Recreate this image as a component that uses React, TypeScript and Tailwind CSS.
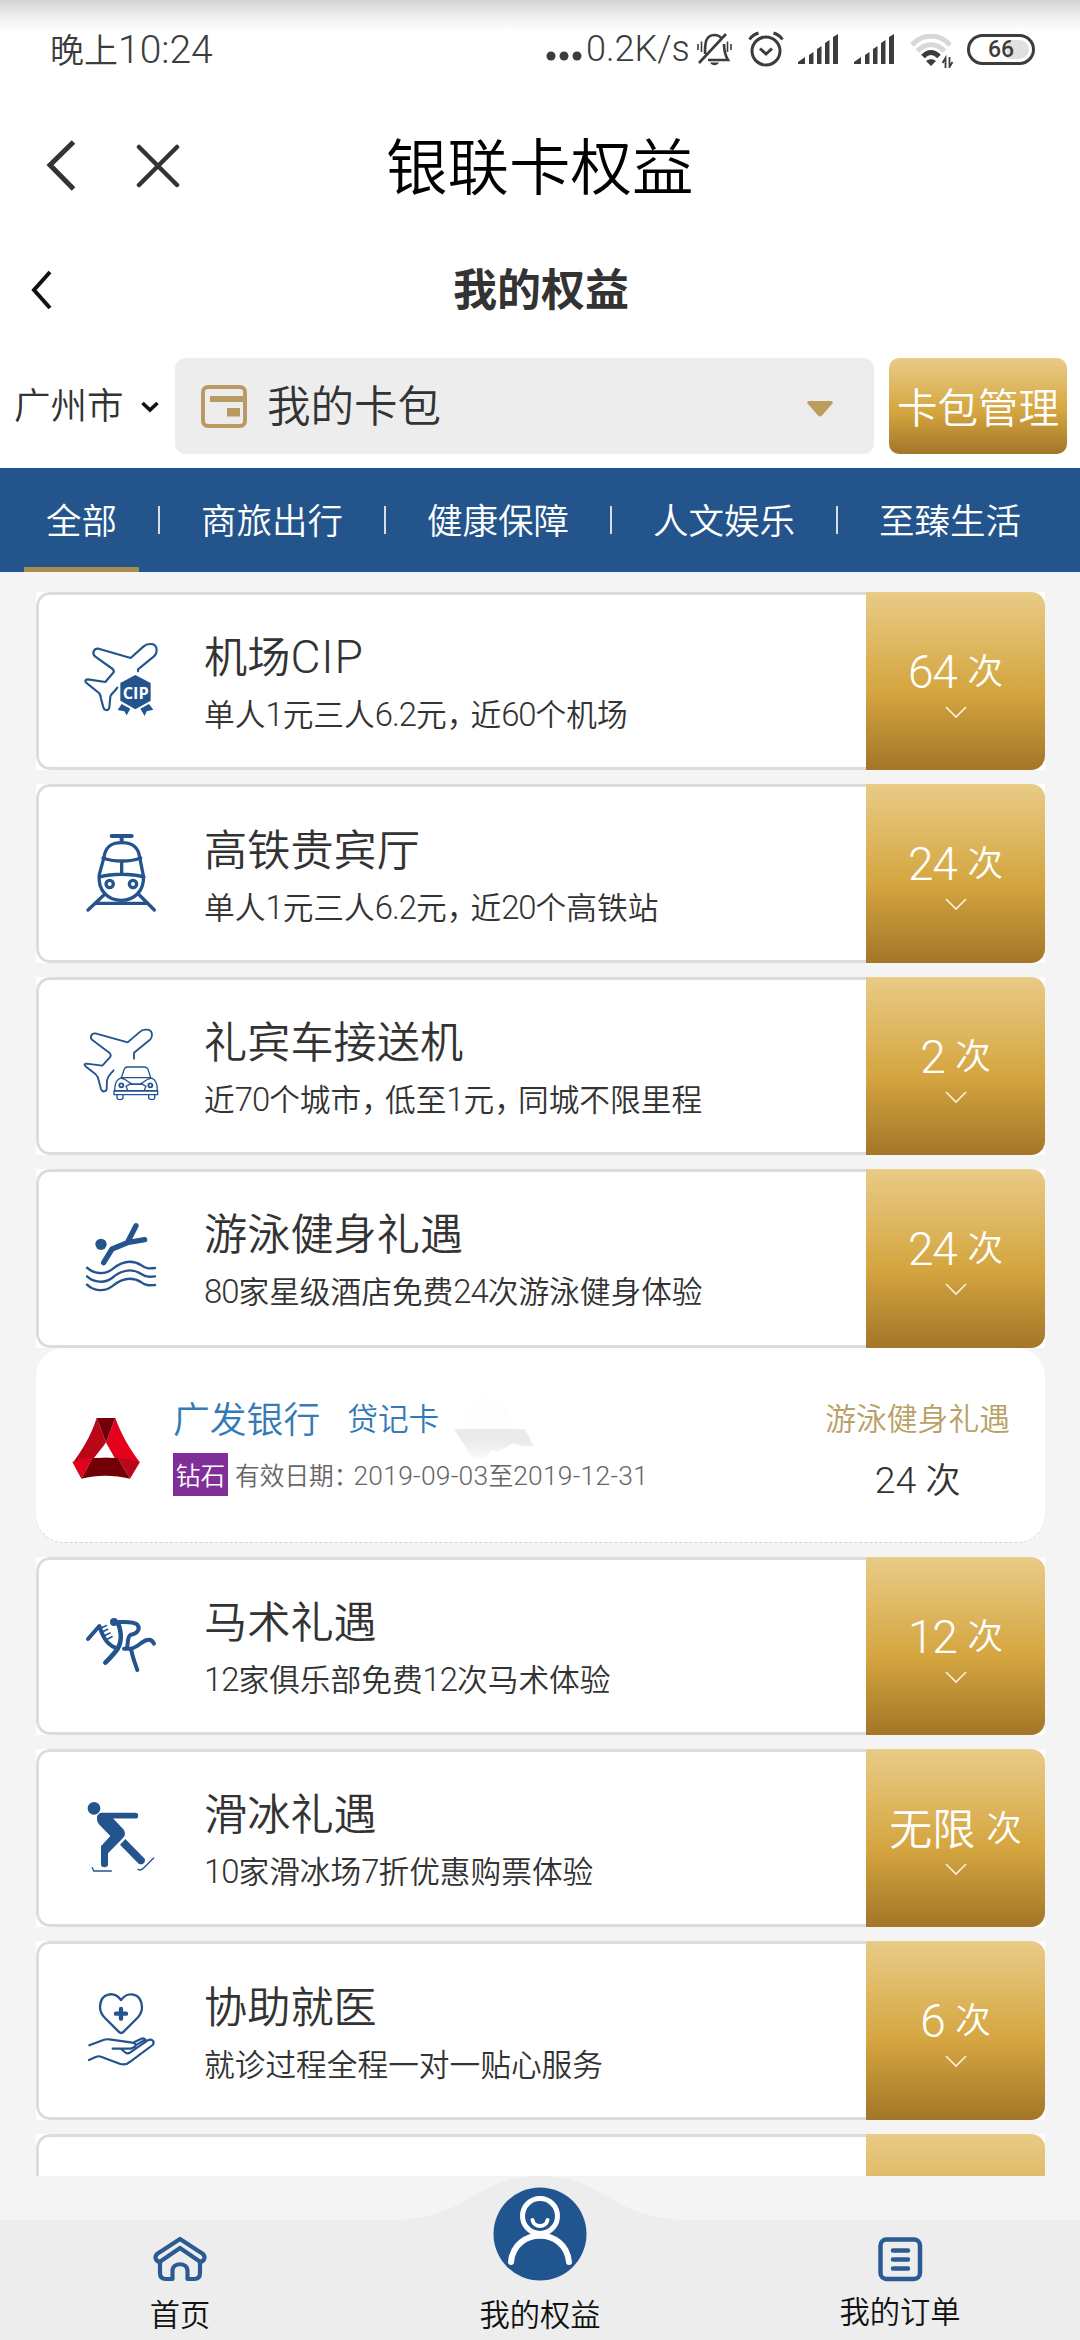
import { Fragment, type ReactNode } from "react";
import { clsx } from "clsx";

type Benefit = {
  id: string;
  title: string;
  desc: string;
  count: string;
  icon?: ReactNode;
};

const BLUE = "#23548e";

// Digits and latin letters use Roboto, slightly bigger than the Chinese glyphs beside them
function Mixed({ text, latin = "tracking-[-0.03em]" }: { text: string; latin?: string }) {
  return (
    <>
      {text.split(/([A-Za-z0-9.\-]+|，)/).map((part, i) => {
        if (part === "，") {
          return (
            <span key={i} className="tracking-[-7px]">
              ，
            </span>
          );
        }
        return /^[A-Za-z0-9.\-]+$/.test(part) ? (
          <span key={i} className={clsx("font-['Roboto'] text-[1.07em] leading-none", latin)}>
            {part}
          </span>
        ) : (
          <Fragment key={i}>{part}</Fragment>
        );
      })}
    </>
  );
}

function CardIcon({ viewBox, width = 7, children }: { viewBox: string; width?: number; children: ReactNode }) {
  return (
    <svg
      className="size-20 shrink-0 overflow-visible"
      viewBox={viewBox}
      fill="none"
      stroke={BLUE}
      strokeWidth={width}
      strokeLinecap="round"
      strokeLinejoin="round"
    >
      {children}
    </svg>
  );
}

const planeIcon = (
  <CardIcon viewBox="153 183 240 240" width={6.5}>
    <path d="M324 274 V268 L371 230 C384 218 384 192 362 192 C352 192 346 194 340 200 L302 234 L206 206 C192 204 184 220 196 230 L248 267 C252 271 252 276 249 279 L226 306 L174 298 C164 299 164 306 171 310 L207 339 C212 345 212 350 213 356 L220 382 C223 393 236 393 238 382 L241 350 C242 343 248 340 254 333 L262 323" />
    <path d="M316 285 L362 309 V362 L316 388 L271 362 V309 Z" fill={BLUE} stroke="none" />
    <path d="M275 372 L301 386 L290 406 L283 394 L263 390 Z M357 372 L331 386 L344 408 L350 394 L370 389 Z" fill={BLUE} stroke="none" />
    <text
      x="317"
      y="356"
      textAnchor="middle"
      textLength="78"
      lengthAdjust="spacingAndGlyphs"
      className="font-['Open_Sans'] text-[47px] font-bold"
      fill="#fff"
      stroke="none"
    >
      CIP
    </text>
  </CardIcon>
);

const trainIcon = (
  <CardIcon viewBox="153 759 240 240" width={10}>
    <path d="M245 765 H305 M275 765 V784" strokeWidth={12} />
    <path d="M222 829 C226 798 242 785 275 785 C308 785 325 798 329 829 L340 884 C344 930 312 958 274 958 C236 958 202 930 208 880 Z" />
    <path d="M219 831 C248 843 303 843 332 831 M275 841 V880 M208 888 C248 877 303 877 342 888" />
    <circle cx="239" cy="909" r="11" />
    <circle cx="309" cy="909" r="11" />
    <path d="M225 939 L174 987 M325 939 L373 987 M200 967 H350" />
  </CardIcon>
);

const carIcon = (
  <CardIcon viewBox="153 168 240 240" width={5.5}>
    <path d="M312 266 V248 L358 211 C370 200 369 178 349 179 C340 178 335 180 328 187 L293 217 L196 190 C183 189 178 204 188 211 L238 248 C243 253 243 259 239 263 L217 287 L169 281 C162 281 162 286 168 290 L197 313 C204 319 205 324 206 331 L213 357 C216 367 229 367 230 356 L231 331 C233 322 236 317 242 311 L251 301" />
    <path
      strokeWidth={4}
      d="M274 323 L283 297 C285 292 287 291 292 291 H344 C350 291 352 293 354 298 L362 323 Z M274 323 C258 329 255 340 254 362 H382 C382 340 378 329 362 323 M252 363 H383 V374 H252 Z M261 375 V385 C262 390 277 390 279 385 V375 M356 375 V385 C358 390 373 390 374 385 V375 M274 325 C290 326 293 338 308 342 H329 C343 339 346 327 362 325 M293 361 L288 349 L298 343 H338 L348 349 L343 361"
    />
    <circle cx="274" cy="346" r="6" />
    <circle cx="361" cy="346" r="6" />
  </CardIcon>
);

const swimIcon = (
  <CardIcon viewBox="153 744 240 240" width={7}>
    <circle cx="213" cy="823" r="17" fill={BLUE} stroke="none" />
    <path d="M221 878 L246 837 L292 818 L344 809 M292 818 L318 767" strokeWidth={16} />
    <path d="M171 893 C192 912 224 915 246 898 C278 872 306 868 334 886 C349 897 360 896 375 894 M171 919 C192 938 224 941 246 924 C278 898 306 894 334 912 C349 922 360 921 375 919 M171 944 C192 964 224 966 246 949 C278 923 306 919 334 937 C349 948 360 946 375 945" />
  </CardIcon>
);

const horseIcon = (
  <CardIcon viewBox="153 168 240 240" width={12}>
    <path d="M174 267 L208 228 C216 252 226 280 254 292" />
    <path d="M250 214 C272 220 306 211 322 224 C333 238 320 252 303 254 C291 259 295 277 291 293" />
    <path d="M264 219 C276 250 275 282 258 303 C248 316 238 326 226 338" strokeWidth={14} />
    <path d="M282 296 H303 C323 292 334 274 351 270 C363 267 368 272 372 281 M303 296 C307 320 315 340 322 360" />
    <circle cx="252" cy="216" r="6" fill={BLUE} />
    <path d="M212 234 L229 227 M217 246 L233 238 M223 257 L240 249 M229 269 L246 260" strokeWidth={5} />
  </CardIcon>
);

const skateIcon = (
  <CardIcon viewBox="153 744 240 240" width={17}>
    <circle cx="192" cy="775" r="19" fill={BLUE} stroke="none" />
    <path d="M214 797 H316" />
    <path d="M201 803 C201 793 210 789 222 789 H248 V804 L280 838 C287 847 286 858 279 864 L234 910 V944 C234 954 213 954 213 944 V889 L241 858 L209 825 C203 818 200 811 201 803 Z" fill={BLUE} stroke="none" />
    <path d="M286 867 L344 926 C348 937 337 947 326 941 L270 884 Z" fill={BLUE} stroke="none" />
    <path d="M187 953 L191 963 H244 M324 958 C330 962 335 960 341 954 L371 924" strokeWidth={4} />
  </CardIcon>
);

const heartIcon = (
  <CardIcon viewBox="153 183 240 240" width={7}>
    <path d="M273 210 C254 184 212 186 210 230 C210 246 217 256 225 264 L266 305 C271 310 276 310 281 305 L322 264 C330 256 336 246 336 232 C334 186 291 184 273 210 Z" />
    <path d="M273 237 V266 M258 251 H288" strokeWidth={13} />
    <path
      strokeWidth={6.5}
      d="M178 346 L218 331 C225 328 231 327 238 328 L302 337 C318 339 322 347 311 352 L302 356 H248 M273 357 L288 369 C292 371 297 370 301 367 L352 332 C365 323 376 335 368 345 L302 394 C292 403 282 406 269 401 L213 380 C207 377 202 379 197 381 L177 390 M312 337 L334 326 C340 324 344 326 347 330 M320 344 L342 331"
    />
  </CardIcon>
);

const benefits: Benefit[] = [
  { id: "cip", title: "机场CIP", desc: "单人1元三人6.2元，近60个机场", count: "64", icon: planeIcon },
  { id: "train", title: "高铁贵宾厅", desc: "单人1元三人6.2元，近20个高铁站", count: "24", icon: trainIcon },
  { id: "car", title: "礼宾车接送机", desc: "近70个城市，低至1元，同城不限里程", count: "2", icon: carIcon },
  { id: "swim", title: "游泳健身礼遇", desc: "80家星级酒店免费24次游泳健身体验", count: "24", icon: swimIcon },
  { id: "horse", title: "马术礼遇", desc: "12家俱乐部免费12次马术体验", count: "12", icon: horseIcon },
  { id: "skate", title: "滑冰礼遇", desc: "10家滑冰场7折优惠购票体验", count: "无限", icon: skateIcon },
  { id: "medical", title: "协助就医", desc: "就诊过程全程一对一贴心服务", count: "6", icon: heartIcon },
  { id: "next", title: "", desc: "", count: "" },
];

const tabs = ["全部", "商旅出行", "健康保障", "人文娱乐", "至臻生活"];

function Signal() {
  return (
    <svg className="h-[30px] w-[40px]" viewBox="0 0 40 30" fill="#3c3c3c">
      <path d="M0 30 V28 L7 23 V30 Z M11 30 V21 L15.500 18 V30 Z M19 30 V15 L23.500 12 V30 Z M27 30 V9 L31.500 6 V30 Z M35 30 V3 L40 0 V30 Z" />
    </svg>
  );
}

function StatusBar() {
  return (
    <div className="flex h-[100px] items-center justify-between bg-[linear-gradient(to_bottom,#d2d2d2_0,#ececec_14px,#fff_32px)] pb-[2px] pl-[50px] pr-[45px] text-[#3c3c3c]">
      <div className="flex items-baseline text-[34px] leading-[50px]">
        晚上
        <span className="font-['Roboto'] text-[39px] leading-none">10:24</span>
      </div>
      <div className="flex items-center">
        <svg className="mt-[14px] h-[10px] w-[36px]" viewBox="0 0 36 10" fill="#3c3c3c">
          <circle cx="5" cy="5" r="4.500" />
          <circle cx="18" cy="5" r="4.500" />
          <circle cx="31" cy="5" r="4.500" />
        </svg>
        <span className="ml-1 w-[104px] whitespace-nowrap font-['Roboto'] text-[36px] leading-[44px]">0.2K/s</span>
        <svg className="ml-[7px] h-[34px] w-[35px]" viewBox="0 0 35 34" fill="none" stroke="#3c3c3c" strokeWidth="2.600">
          <path d="M2 31 L29 2 M8 22 C8 12 8 3 17.500 3 C21 3 23 4 25 7 M27 12 C27 20 28 23 31 28 H11" />
          <path d="M13 30.500 H22 C20 34 15 34 13 30.500 Z" fill="#3c3c3c" stroke="none" />
          <path d="M1 12 V18 M4.500 9.500 V20 M30.500 9.500 V20 M34 12 V18" strokeWidth="1.600" />
        </svg>
        <svg className="ml-[16px] h-[36px] w-[36px]" viewBox="0 0 36 36" fill="none" stroke="#3c3c3c" strokeWidth="3">
          <circle cx="18" cy="20" r="14" />
          <path d="M12 17.500 L18 23 L24 17.500 M1.500 8.500 C4 5 7 3 10.500 2 M34.500 8.500 C32 5 29 3 25.500 2" />
        </svg>
        <div className="ml-[14px] flex gap-4">
          <Signal />
          <Signal />
        </div>
        <svg className="ml-4 mt-[3px] h-[34px] w-[44px]" viewBox="0 0 44 34" fill="none" strokeWidth="5">
          <path d="M2 11 C13 -1 29 -1 40 11" stroke="#d8d8d8" />
          <path d="M7.500 17 C15 8.500 27 8.500 34.500 17" stroke="#d8d8d8" />
          <path d="M13 22.500 C18 17 24 17 29 22.500" stroke="#3c3c3c" />
          <path d="M16 27 C19 24.500 23 24.500 26 27 L21 32 Z" fill="#3c3c3c" stroke="none" />
          <path d="M35.500 34 V24 L32.500 29 M39.500 23 V33 L42.500 28" stroke="#3c3c3c" strokeWidth="1.800" />
        </svg>
        <div className="ml-[13px] flex h-[31px] w-[68px] items-center rounded-full border-[3px] border-[#3c3c3c] bg-white p-[3px]">
          <div className="flex h-full w-full items-center justify-center rounded-full bg-[linear-gradient(to_right,#fff_60%,#e0e0e0_60%)] font-['Roboto'] text-[23px] font-medium leading-none">
            66
          </div>
        </div>
      </div>
    </div>
  );
}

function Header() {
  return (
    <>
      <div className="flex h-[134px] items-center pb-[3px]">
        <svg className="ml-[44px] h-[54px] w-[34px]" viewBox="0 0 34 54" fill="none" stroke="#333" strokeWidth="5">
          <path d="M29.500 3 L6 26 L29.500 50" />
        </svg>
        <svg className="ml-[58px] h-[44px] w-[44px]" viewBox="0 0 44 44" fill="none" stroke="#333" strokeWidth="4.500" strokeLinecap="round">
          <path d="M3 3 L41 41 M41 3 L3 41" />
        </svg>
        <h1 className="ml-[206px] pb-[4px] text-[61.500px] leading-[80px] text-black">银联卡权益</h1>
      </div>
      <div className="flex h-[112px] items-center">
        <svg className="ml-[30px] h-[42px] w-[22px]" viewBox="0 0 22 42" fill="none" stroke="#111" strokeWidth="4">
          <path d="M20 3 L4 21 L20 39" />
        </svg>
        <h2 className="ml-[401px] pb-[6px] text-[44px] font-bold leading-[60px] text-[#333]">我的权益</h2>
      </div>
    </>
  );
}

function CardPicker() {
  return (
    <div className="flex h-[122px] pt-3">
      <button className="flex h-24 w-[175px] items-center pl-[14px] text-[36.500px] text-[#333]">
        <span className="pb-[3px]">广州市</span>
        <svg className="ml-[17px] mt-[2px] h-[12px] w-[18px]" viewBox="0 0 18 12" fill="none" stroke="#111" strokeWidth="3.600">
          <path d="M1.500 2 L9 9 L16.500 2" />
        </svg>
      </button>
      <button className="flex h-24 w-[699px] items-center rounded-[10px] bg-[#ededed] pl-[26px] pr-[41px] text-[43.500px] text-[#333]">
        <svg className="h-[43px] w-[46px]" viewBox="0 0 46 43" fill="none" stroke="#b89a62" strokeWidth="4">
          <rect x="2" y="2" width="42" height="39" rx="5" />
          <path d="M9 14 H44" strokeWidth="6" />
          <path d="M26 23 H39 V31.500 H26 Z" fill="#b89a62" stroke="none" />
        </svg>
        <span className="ml-[20px] pb-[5px] leading-[60px]">我的卡包</span>
        <svg className="ml-auto mt-[5px] h-[16px] w-[26px]" viewBox="0 0 26 16" fill="#bd9d5e">
          <path d="M2 0 H24 Q27 1 25 3 L15 14.500 Q13 16.500 11 14.500 L1 3 Q-1 1 2 0 Z" />
        </svg>
      </button>
      <button className="ml-[15px] h-24 w-[178px] whitespace-nowrap rounded-[10px] bg-[linear-gradient(to_bottom,#e9cb87_0%,#d5a640_55%,#a37628_100%)] text-center text-[40.500px] text-white">
        卡包管理
      </button>
    </div>
  );
}

function TabBar() {
  return (
    <nav className="flex h-[104px] bg-[#24548c] pl-6 text-[35.500px] text-white">
      {tabs.map((tab, i) => (
        <Fragment key={tab}>
          {i > 0 && (
            <div className="flex w-10 items-center justify-center">
              <span className="h-[28px] w-[2px] bg-[#d5dde8]" />
            </div>
          )}
          <div
            className={clsx(
              "flex items-center justify-center whitespace-nowrap border-y-[5px] border-t-transparent pb-[3px]",
              i === 0 ? "w-[115px] border-b-[#a98d4b]" : "w-[186px] border-b-transparent",
            )}
          >
            {tab}
          </div>
        </Fragment>
      ))}
    </nav>
  );
}

function BenefitCard({ item }: { item: Benefit }) {
  return (
    <div className="mb-[14px] h-[178.400px] shrink-0 bg-white">
      <div className="flex h-full overflow-hidden rounded-[14px]">
        <div className="flex flex-1 items-center rounded-l-[14px] border-[3px] border-r-0 border-[#dcdcdc] pl-[42px]">
          {item.icon}
          <div className="ml-[43px] whitespace-nowrap text-[#333]">
            <h3 className="mb-[8px] h-[56px] text-[43.200px] leading-[56px]">
              <Mixed text={item.title} latin="tracking-[0.02em]" />
            </h3>
            <p className="h-[46px] text-[30.700px] leading-[46px]">
              <Mixed text={item.desc} />
            </p>
          </div>
        </div>
        <div className="flex w-[179px] flex-col items-center bg-[linear-gradient(to_bottom,#e9cb87_0%,#d5a640_55%,#a37628_100%)] pt-[47px] text-white">
          {item.count && (
            <>
              <div className="flex h-[60px] items-center gap-[11px] whitespace-nowrap text-[43px] leading-[60px]">
                <span>
                  <Mixed text={item.count} />
                </span>
                <span className="text-[35.500px]">次</span>
              </div>
              <svg className="mt-[7px] h-[13px] w-[22px]" viewBox="0 0 22 13" fill="none" stroke="#fbf1dc" strokeWidth="1.600">
                <path d="M1 1 L11 11 L21 1" />
              </svg>
            </>
          )}
        </div>
      </div>
    </div>
  );
}

function CardDetail() {
  return (
    <div className="mb-[14px] flex h-[195px] shrink-0 rounded-[28px] border-b border-dashed border-[#dccfb0] bg-white">
      <svg className="ml-[36px] mt-[69px] h-[63px] w-[69px]" viewBox="36 51 207 189">
        <path d="M110 54 L138 128 L100 176 L40 186 C66 150 92 110 110 54 Z" fill="#b80818" />
        <path d="M166 54 L138 128 L165 176 L239 186 C212 150 186 110 166 54 Z" fill="#e4001c" />
        <path d="M110 54 H166 L138 128 Z" fill="#730006" />
        <path d="M37 186 C66 178 85 175 97 175 L64 236 Z" fill="#e4001c" />
        <path d="M240 186 C215 178 188 175 174 175 L210 236 Z" fill="#b80818" />
        <path d="M97 175 C120 172 150 172 174 175 L210 236 C160 224 112 224 64 236 Z" fill="#730006" />
        <path d="M137 128 L114 173 C130 171 147 171 163 173 Z" fill="#fff" />
      </svg>
      <div className="ml-[32px] mt-[44px] whitespace-nowrap">
        <div className="flex h-[50px] items-center text-[#337ab7]">
          <span className="text-[36.800px] leading-[50px]">广发银行</span>
          <span className="ml-[27px] text-[30.700px] leading-[50px]">贷记卡</span>
          {/* faint card watermark */}
          <svg className="ml-[15px] h-[70px] w-[80px] self-start" viewBox="0 0 80 70">
            <defs>
              <linearGradient id="watermark" x1="0" y1="0" x2="0" y2="1">
                <stop offset="0.400" stopColor="#ebebeb" />
                <stop offset="1" stopColor="#fafafa" />
              </linearGradient>
            </defs>
            <path d="M0 37 H71 L80 54 C72 55 66 54 62 52 C54 50 46 64 38 58 C32 68 22 68 16 62 Z" fill="url(#watermark)" />
            <path d="M10 34 C12 22 22 10 34 4 C44 12 56 18 60 34 Z" fill="#fdfdfd" />
          </svg>
        </div>
        <div className="mt-[11px] flex items-center text-[#666]">
          <span className="h-[43px] w-[55px] bg-[#7f2f97] text-center text-[24.700px] leading-[43px] text-white">钻石</span>
          <span className="ml-[7px] text-[24.700px] leading-[43px]">
            有效日期：
            <span className="ml-[-5px]">
              <Mixed text="2019-09-03至2019-12-31" latin="tracking-[0.01em]" />
            </span>
          </span>
        </div>
      </div>
      <div className="ml-auto mr-[35px] mt-[44px] flex flex-col items-center">
        <span className="h-[50px] text-[30.800px] leading-[50px] text-[#b9a063]">游泳健身礼遇</span>
        <div className="mt-[8px] flex h-[56px] items-center gap-[9px] text-[35px] leading-[56px] text-[#333]">
          <span>
            <Mixed text="24" latin="tracking-normal" />
          </span>
          <span>次</span>
        </div>
      </div>
    </div>
  );
}

function BottomNav() {
  return (
    <footer className="relative h-[164px] bg-[#f4f4f4] text-[30.300px] leading-[40px] text-[#111]">
      <svg className="absolute inset-0 h-full w-full" viewBox="0 0 1080 164" fill="#ededed">
        <path d="M0 44 H390 C470 44 474 0 540 0 C606 0 610 44 690 44 H1080 V164 H0 Z" />
      </svg>
      <div className="relative grid h-full grid-cols-3">
        <a className="flex flex-col items-center pt-[60px]">
          <svg className="h-[46px] w-[56px]" viewBox="0 0 56 46" fill="none" stroke="#2c5a92" strokeWidth="4.200" strokeLinejoin="round" strokeLinecap="round">
            <path d="M28 3 L5 18 C2 21 4 27 9 25 L28 12 L47 25 C52 27 54 21 51 18 Z" />
            <path d="M8 26 V37 C8 41 10 43 14 43 H20.500 V35 C20.500 26 35.500 26 35.500 35 V43 H42 C46 43 48 41 48 37 V26" />
          </svg>
          <span className="mt-[11px]">首页</span>
        </a>
        <a className="flex flex-col items-center pt-[11px]">
          <svg className="size-[94px]" viewBox="0 0 94 94" fill="none" stroke="#fff" strokeLinecap="round">
            <circle cx="47" cy="47" r="46.500" fill="#21558f" stroke="none" />
            <circle cx="47" cy="29" r="17.500" strokeWidth="5" />
            <path d="M39.500 33 C41 41 53 41 54.500 33" strokeWidth="4" />
            <path d="M18 75 C21 40 73 40 76 75" strokeWidth="6" />
          </svg>
          <span className="mt-[12px]">我的权益</span>
        </a>
        <a className="flex flex-col items-center pt-[60px]">
          <svg className="h-[46px] w-[46px]" viewBox="0 0 46 46" fill="none" stroke="#2c5a92" strokeWidth="4.500" strokeLinecap="round">
            <rect x="3.500" y="3.500" width="39.500" height="39.500" rx="6" />
            <path d="M16 14.500 H31 M16 23.500 H31 M16 32.500 H31" />
          </svg>
          <span className="mt-[8px]">我的订单</span>
        </a>
      </div>
    </footer>
  );
}

export default function App() {
  return (
    <div className="flex h-[2340px] w-[1080px] flex-col overflow-hidden bg-white font-['Noto_Sans_CJK_SC',sans-serif] font-[350]">
      <StatusBar />
      <Header />
      <CardPicker />
      <TabBar />
      <main className="flex h-[1604px] flex-col overflow-hidden bg-[#f4f4f4] pl-[36px] pr-[35px] pt-5">
        {benefits.map((item) => (
          <Fragment key={item.id}>
            <div className={item.id === "swim" ? "-mb-[14px]" : undefined}>
              <BenefitCard item={item} />
            </div>
            {item.id === "swim" && <CardDetail />}
          </Fragment>
        ))}
      </main>
      <BottomNav />
    </div>
  );
}
